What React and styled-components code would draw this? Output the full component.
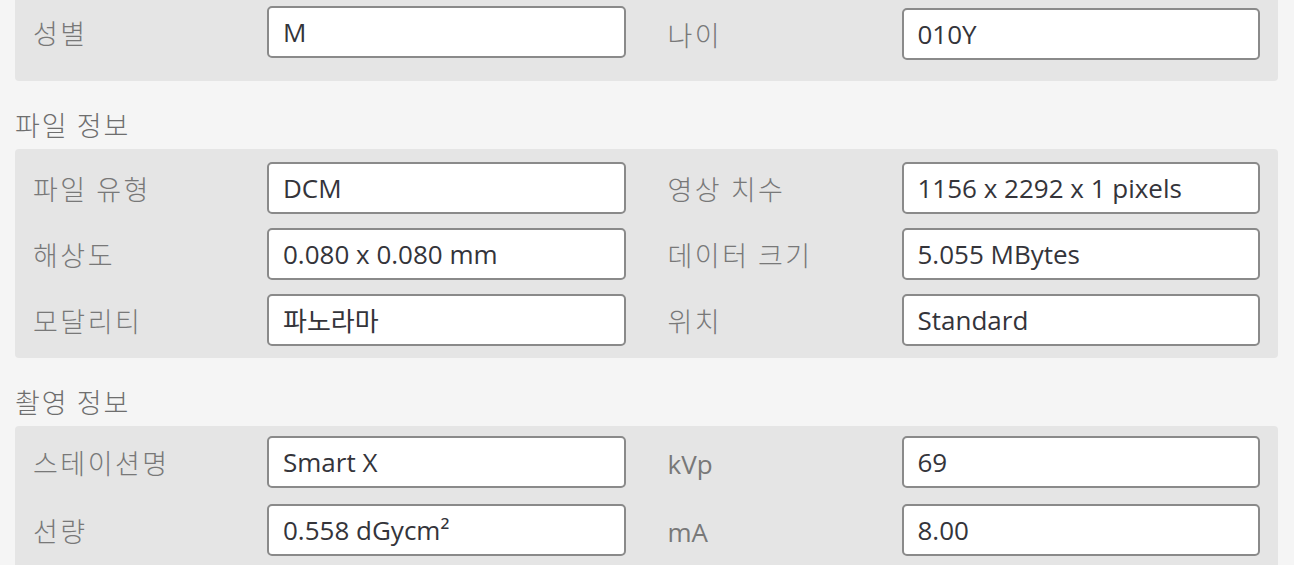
import React from "react";
import styled, { createGlobalStyle } from "styled-components";

const GlobalStyle = createGlobalStyle`
  html, body {
    margin: 0;
    padding: 0;
    background: #f5f5f5;
  }
  body {
    font-family: "Open Sans", "Noto Sans CJK KR", sans-serif;
    overflow: hidden;
  }
`;

// top panel is scrolled, only its last row shows
const sections = [
  {
    title: null,
    gap: 14,
    pad: "4px 18px 21px",
    fields: [
      ["성별", "M"],
      ["나이", "010Y", 4],
    ],
  },
  {
    title: "파일 정보",
    gap: 14,
    pad: "13px 18px 12px",
    fields: [
      ["파일 유형", "DCM"],
      ["영상 치수", "1156 x 2292 x 1 pixels"],
      ["해상도", "0.080 x 0.080 mm"],
      ["데이터 크기", "5.055 MBytes"],
      ["모달리티", "파노라마"],
      ["위치", "Standard"],
    ],
  },
  {
    title: "촬영 정보",
    gap: 16,
    pad: "10px 18px 12px",
    fields: [
      ["스테이션명", "Smart X"],
      ["kVp", "69"],
      ["선량", "0.558 dGycm²"],
      ["mA", "8.00"],
    ],
  },
];

function InfoPanel() {
  return (
    <Page>
      <GlobalStyle />
      {sections.map((section, i) => (
        <Section key={i}>
          {section.title && <Heading>{section.title}</Heading>}
          <Panel $clipped={!section.title} $gap={section.gap} $pad={section.pad}>
            {section.fields.map(([label, value, shift]) => (
              <Field key={label} $shift={shift || 0}>
                <Label $latin={/^[a-zA-Z]/.test(label)}>{label}</Label>
                <ValueBox>{value}</ValueBox>
              </Field>
            ))}
          </Panel>
        </Section>
      ))}
    </Page>
  );
}

export default InfoPanel;

const Page = styled.div`
  width: 1294px;
  height: 565px;
  padding: 0 16px 0 15px;
  box-sizing: border-box;
  overflow: hidden;
`;

const Section = styled.section`
  display: flex;
  flex-direction: column;
`;

const Heading = styled.h3`
  margin: 0;
  padding: 28px 0 8px;
  font-family: "Noto Sans CJK KR", sans-serif;
  font-weight: 300;
  font-size: 27px;
  line-height: 32px;
  letter-spacing: 2px;
  color: #6e6e6e;
`;

const Panel = styled.div`
  display: grid;
  grid-template-columns: 1fr 1fr;
  column-gap: 42px;
  row-gap: ${(p) => p.$gap}px;
  padding: ${(p) => p.$pad};
  background: #e5e5e5;
  border-radius: ${(p) => (p.$clipped ? "0 0 4px 4px" : "4px")};
`;

const Field = styled.div`
  display: grid;
  grid-template-columns: 234px 1fr;
  align-items: center;
  margin-top: ${(p) => p.$shift}px;
`;

const Label = styled.span`
  font-family: ${(p) =>
    p.$latin ? `"Open Sans", sans-serif` : `"Noto Sans CJK KR", sans-serif`};
  font-weight: ${(p) => (p.$latin ? 400 : 300)};
  font-size: ${(p) => (p.$latin ? "26px" : "27px")};
  letter-spacing: ${(p) => (p.$latin ? "0" : "2.5px")};
  color: #787878;
  white-space: nowrap;
  padding-top: ${(p) => (p.$latin ? "4px" : "0")};
`;

const ValueBox = styled.div`
  height: 52px;
  box-sizing: border-box;
  display: flex;
  align-items: center;
  padding: 0 14px;
  background: #ffffff;
  border: 2px solid #8a8a8a;
  border-radius: 5px;
  font-family: "Open Sans", "Noto Sans CJK KR", sans-serif;
  font-size: 26px;
  color: #34343a;
  white-space: nowrap;
`;
